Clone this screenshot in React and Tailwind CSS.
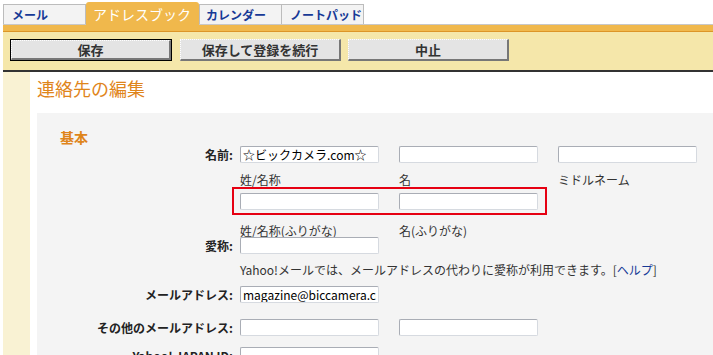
import React from "react";

function Field({ value = "" }) {
  return (
    <input
      readOnly
      value={value}
      className="block h-[17px] w-[139px] shrink-0 rounded-[2px] border border-[#a9adb5] border-r-[#d6dae0] border-b-[#d6dae0] bg-white px-[2px] text-[12px] leading-[15px] text-black outline-none"
    />
  );
}

function Label({ children }) {
  return (
    <div className="w-[196px] shrink-0 text-right text-[12px] font-bold leading-[17px] text-[#222]">
      {children}
    </div>
  );
}

function Row({ label, children, className = "" }) {
  return (
    <div className={"flex h-[17px] items-center " + className}>
      <Label>{label}</Label>
      <div className="ml-[7px] flex gap-[20px]">{children}</div>
    </div>
  );
}

function Sub({ items, className = "" }) {
  return (
    <div className={"ml-[203px] flex h-[13px] gap-[20px] text-[12px] leading-[13px] text-[#333] " + className}>
      {items.map((t, i) => (
        <span key={i} className="w-[139px] shrink-0 whitespace-nowrap">
          {t}
        </span>
      ))}
    </div>
  );
}

export default function App() {
  return (
    <div className="min-h-[355px] bg-white pl-[3px] font-[family-name:'Noto_Sans_CJK_JP',sans-serif]">
      {/* tabs */}
      <div className="flex h-[24px] items-end">
        <div className="flex h-[20px] w-[83px] items-center border border-b-0 border-[#bcbcbc] bg-[#f3f3f3] pl-[8px] text-[12px] font-bold leading-[14px] text-[#173a96]">
          メール
        </div>
        <div className="relative top-px z-10 flex h-[23px] w-[113px] items-center rounded-t-[3px] bg-[#f0b84c] pl-[7px] text-[14px] leading-[16px] text-white">
          アドレスブック
        </div>
        <div className="flex h-[20px] w-[83px] items-center border border-b-0 border-[#bcbcbc] bg-[#f3f3f3] pl-[6px] text-[12px] font-bold leading-[14px] text-[#173a96]">
          カレンダー
        </div>
        <div className="-ml-px flex h-[20px] w-[83px] items-center border border-b-0 border-[#bcbcbc] bg-[#f3f3f3] pl-[8px] text-[12px] font-bold leading-[14px] text-[#173a96]">
          ノートパッド
        </div>
      </div>
      {/* band */}
      <div className="h-[8px] border-t border-b border-t-[#c8c8c8] border-b-[#dc9528] bg-[#f0b84c]" />
      {/* buttons */}
      <div className="flex h-[38px] gap-[8px] bg-[#f5e7aa] pl-[7px] pt-[7px]">
        <div className="flex h-[22px] w-[162px] border border-black">
          <div className="flex flex-1 items-center justify-center border-t border-l border-b-2 border-r-2 border-t-white border-l-white border-b-[#777] border-r-[#777] bg-[#e4e4e4] text-[13px] font-bold leading-[15px] text-[#333] [border-style:dotted_solid_solid_dotted]">
            保存
          </div>
        </div>
        <div className="flex h-[22px] w-[161px] items-center justify-center border-t border-l border-b-2 border-r-2 border-t-white border-l-white border-b-[#777] border-r-[#777] bg-[#e4e4e4] text-[13px] font-bold leading-[15px] text-[#333] [border-style:dotted_solid_solid_dotted]">
          保存して登録を続行
        </div>
        <div className="-ml-px flex h-[22px] w-[161px] items-center justify-center border-t border-l border-b-2 border-r-2 border-t-white border-l-white border-b-[#777] border-r-[#777] bg-[#e4e4e4] text-[13px] font-bold leading-[15px] text-[#333] [border-style:dotted_solid_solid_dotted]">
          中止
        </div>
      </div>
      <div className="h-[2px] bg-[#333]" />
      {/* body */}
      <div className="flex">
        <div className="w-[27px] shrink-0 bg-[#f9f2d3]" />
        <div className="min-w-0 flex-1 pl-[7px]">
          <h1 className="mt-[6px] text-[18px] font-normal leading-[20px] text-[#df851b]">
            連絡先の編集
          </h1>
          <div className="mt-[15px] bg-[#f4f4f4] pb-[20px] pt-[16px]">
            <div className="pl-[23px] text-[14px] font-bold leading-[16px] text-[#df851b]">
              基本
            </div>
            <Row label="名前:" className="mt-[1px]">
              <Field value="☆ビックカメラ.com☆" />
              <Field />
              <Field />
            </Row>
            <Sub className="mt-[10px]" items={["姓/名称", "名", "ミドルネーム"]} />
            <div className="mt-[7px] flex h-[17px] items-center">
              <div className="w-[196px] shrink-0" />
              <div className="relative ml-[7px] flex gap-[20px]">
                <Field />
                <Field />
                <div className="pointer-events-none absolute left-[-8px] top-[-6px] h-[28px] w-[315px] border-2 border-[#e60012]" />
              </div>
            </div>
            <Sub className="mt-[14px]" items={["姓/名称(ふりがな)", "名(ふりがな)"]} />
            <Row label="愛称:">
              <Field />
            </Row>
            <div className="ml-[203px] mt-[9px] whitespace-nowrap text-[12px] leading-[14px] text-[#333]">
              Yahoo!メールでは、メールアドレスの代わりに愛称が利用できます。[<span className="text-[#173a96]">ヘルプ</span>]
            </div>
            <Row label="メールアドレス:" className="mt-[9px]">
              <Field value="magazine@biccamera.com" />
            </Row>
            <Row label="その他のメールアドレス:" className="mt-[16px]">
              <Field />
              <Field />
            </Row>
            <Row label="Yahoo! JAPAN ID:" className="mt-[11px]">
              <Field />
            </Row>
          </div>
        </div>
      </div>
    </div>
  );
}
